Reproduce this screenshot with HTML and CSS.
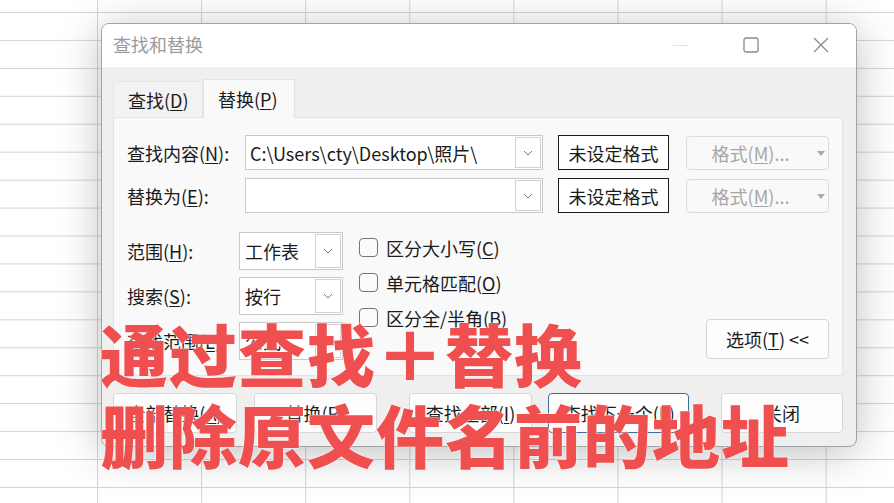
FILE: index.html
```html
<!DOCTYPE html>
<html lang="zh-CN">
<head>
    <meta charset="UTF-8">
    <title>查找和替换</title>
    <link rel="stylesheet" href="styles.css">
</head>
<body>
    <div class="dialog">
        <div class="titlebar">
            <span class="title">查找和替换</span>
            <div class="controls">
                <span class="ctl"><span class="min-line"></span></span>
                <span class="ctl">
                    <svg width="16" height="16" viewBox="0 0 16 16"><rect x="1" y="1" width="14" height="14" rx="2" fill="none" stroke="#8a8a8a" stroke-width="1.3"/></svg>
                </span>
                <span class="ctl">
                    <svg width="16" height="16" viewBox="0 0 16 16"><path d="M1 1 L15 15 M15 1 L1 15" stroke="#8a8a8a" stroke-width="1.3"/></svg>
                </span>
            </div>
        </div>
        <div class="content">
            <div class="tabs">
                <div class="tab">查找(<u>D</u>)</div>
                <div class="tab active">替换(<u>P</u>)</div>
            </div>
            <div class="panel">
                <div class="row">
                    <span class="lbl">查找内容(<u>N</u>):</span>
                    <div class="combo">
                        <span class="val">C:\Users\cty\Desktop\照片\</span>
                        <span class="drop"><svg width="10" height="6" viewBox="0 0 10 6"><path d="M1 1 L5 5 L9 1" fill="none" stroke="#7a7a7a" stroke-width="1"/></svg></span>
                    </div>
                    <button class="fmt">未设定格式</button>
                    <button class="fmt-m">格式(<u>M</u>)...<svg class="tri" width="8" height="5" viewBox="0 0 8 5"><path d="M0 0 L8 0 L4 5 Z" fill="#a9a9a9"/></svg></button>
                </div>
                <div class="row row2">
                    <span class="lbl">替换为(<u>E</u>):</span>
                    <div class="combo">
                        <span class="val"></span>
                        <span class="drop"><svg width="10" height="6" viewBox="0 0 10 6"><path d="M1 1 L5 5 L9 1" fill="none" stroke="#7a7a7a" stroke-width="1"/></svg></span>
                    </div>
                    <button class="fmt">未设定格式</button>
                    <button class="fmt-m">格式(<u>M</u>)...<svg class="tri" width="8" height="5" viewBox="0 0 8 5"><path d="M0 0 L8 0 L4 5 Z" fill="#a9a9a9"/></svg></button>
                </div>
                <div class="lower">
                    <div class="fields">
                        <div class="field">
                            <span class="lbl2">范围(<u>H</u>):</span>
                            <div class="select"><span class="val">工作表</span><span class="drop"><svg width="10" height="6" viewBox="0 0 10 6"><path d="M1 1 L5 5 L9 1" fill="none" stroke="#7a7a7a" stroke-width="1"/></svg></span></div>
                        </div>
                        <div class="field">
                            <span class="lbl2">搜索(<u>S</u>):</span>
                            <div class="select"><span class="val">按行</span><span class="drop"><svg width="10" height="6" viewBox="0 0 10 6"><path d="M1 1 L5 5 L9 1" fill="none" stroke="#7a7a7a" stroke-width="1"/></svg></span></div>
                        </div>
                        <div class="field">
                            <span class="lbl2">查找范围(<u>L</u>):</span>
                            <div class="select"><span class="val">公式</span><span class="drop"><svg width="10" height="6" viewBox="0 0 10 6"><path d="M1 1 L5 5 L9 1" fill="none" stroke="#7a7a7a" stroke-width="1"/></svg></span></div>
                        </div>
                    </div>
                    <div class="checks">
                        <label class="check"><span class="box"></span>区分大小写(<u>C</u>)</label>
                        <label class="check"><span class="box"></span>单元格匹配(<u>O</u>)</label>
                        <label class="check"><span class="box"></span>区分全/半角(<u>B</u>)</label>
                    </div>
                    <button class="btn opts">选项(<u>T</u>) &lt;&lt;</button>
                </div>
            </div>
            <div class="actions">
                <button class="btn a1">全部替换(<u>A</u>)</button>
                <button class="btn a2">替换(<u>R</u>)</button>
                <button class="btn a3">查找全部(<u>I</u>)</button>
                <button class="btn a4 default">查找下一个(<u>F</u>)</button>
                <button class="btn a5">关闭</button>
            </div>
        </div>
    </div>
    <div class="caption">
        <div>通过查找＋替换</div>
        <div>删除原文件名前的地址</div>
    </div>
</body>
</html>
```

FILE: styles.css
```css
html, body { margin: 0; height: 503px; overflow: hidden; }
body {
    font-family: "Noto Sans CJK SC", "Noto Sans", sans-serif;
    font-size: 18px;
    color: #1b1b1b;
    background-color: #fff;
    background-image: linear-gradient(to right, #d4d4d4 1px, transparent 1px), linear-gradient(to bottom, #d4d4d4 1px, transparent 1px);
    background-size: 104.1px 27.94px;
    background-position: 97px 12px;
    padding-top: 23px;
    box-sizing: border-box;
}
u { text-decoration: underline; text-underline-offset: 2px; }
button { font-family: inherit; font-size: 18px; color: #1b1b1b; cursor: default; padding: 0; }

.dialog { margin-left: 101px; width: 756px; box-sizing: border-box; border: 1px solid #a3a3a3; border-radius: 8px; background: #efefef; box-shadow: 0 6px 44px rgba(0,0,0,0.25); overflow: hidden; }
.titlebar { height: 43px; background: #fff; display: flex; align-items: center; justify-content: space-between; }
.title { padding-left: 11px; font-size: 18px; color: #9b9b9b; margin-top: -3px; }
.controls { display: flex; height: 100%; }
.ctl { width: 70px; display: flex; align-items: center; justify-content: center; margin-top: -1px; }
.min-line { width: 16px; height: 1px; background: #e2e2e2; }

.content { padding: 12px 13px 13px 11px; }
.tabs { display: flex; align-items: flex-end; height: 38px; }
.tab { height: 36px; padding: 0 0 0 14px; display: flex; align-items: center; box-sizing: border-box; width: 90px; background: #f2f2f2; border: 1px solid #e6e6e6; border-bottom: none; white-space: nowrap; }
.tab.active { height: 39px; width: 92px; margin-bottom: -1px; background: #f9f9f9; border-color: #e3e3e3; position: relative; z-index: 1; padding-left: 14px; }

.panel { height: 259px; box-sizing: border-box; background: #f9f9f9; border: 1px solid #e3e3e3; padding: 17px 13px 0 13px; }
.row { display: flex; align-items: center; height: 35px; }
.row2 { margin-top: 8px; }
.lbl { width: 118px; white-space: nowrap; }
.combo { width: 298px; height: 35px; box-sizing: border-box; border: 1px solid #c9c9c9; background: #fff; display: flex; align-items: center; justify-content: space-between; padding: 0 1px 0 4px; }
.combo .val { white-space: nowrap; }
.drop { width: 26px; height: 31px; box-sizing: border-box; border: 1px solid #d2d2d2; background: #fff; display: flex; align-items: center; justify-content: center; flex-shrink: 0; }
.fmt { margin-left: 15px; width: 111px; height: 35px; background: #fff; border: 1.5px solid #1b1b1b; }
.fmt-m { margin-left: 17px; width: 143px; height: 34px; background: #f9f9f9; border: 1px solid #dcdcdc; border-radius: 4px; color: #a6a6a6; position: relative; padding-right: 14px; }
.fmt-m u { text-decoration-color: #a6a6a6; }
.tri { position: absolute; right: 3px; top: 14px; }

.lower { display: flex; margin-top: 19px; }
.fields { display: flex; flex-direction: column; gap: 7px; }
.field { display: flex; align-items: center; height: 38px; }
.lbl2 { width: 112px; white-space: nowrap; }
.select { width: 104px; height: 38px; box-sizing: border-box; border: 1px solid #c9c9c9; background: #fff; display: flex; align-items: center; justify-content: space-between; padding: 0 1px 0 5px; }
.select .drop { height: 34px; width: 26px; }
.checks { margin-left: 16px; margin-top: -2px; display: flex; flex-direction: column; }
.check { height: 35px; display: flex; align-items: center; white-space: nowrap; }
.box { width: 19px; height: 19px; box-sizing: border-box; border: 1px solid #747474; border-radius: 4px; background: #fbfbfb; margin-right: 8px; }

.btn { height: 40px; background: #fdfdfd; border: 1px solid #d6d6d6; border-radius: 4px; white-space: nowrap; }
.opts { margin-left: auto; align-self: flex-end; width: 123px; margin-bottom: 1px; }

.actions { display: flex; margin-top: 17px; }
.a1 { width: 124px; }
.a2 { width: 123px; margin-left: 17px; }
.a3 { width: 124px; margin-left: 32px; }
.a4 { width: 141px; margin-left: 16px; }
.a5 { width: 122px; margin-left: 32px; }
.default { border-color: #3b6c9c; }

.caption { position: absolute; left: 100px; top: 312px; font-size: 68px; line-height: 81px; font-weight: 900; color: #f04f4f; letter-spacing: 1px; text-shadow: 0 0 2px rgba(255,255,255,0.9), 0 0 1px rgba(255,255,255,0.9); white-space: nowrap; }
```
